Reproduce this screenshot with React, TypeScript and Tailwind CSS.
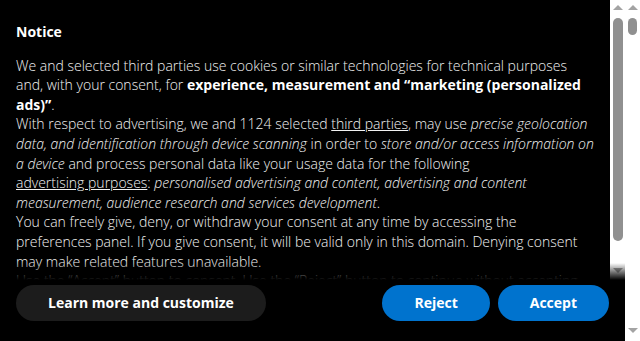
const Arrow = ({ down = false }: { down?: boolean }) => (
  <svg width="10" height="5" viewBox="0 0 10 5" className="fill-[#a3a3a3]">
    {down ? <polygon points="0,0 10,0 5,5" /> : <polygon points="0,5 10,5 5,0" />}
  </svg>
);

export default function App() {
  return (
    <div className="flex h-[341px] bg-white font-['Open_Sans',sans-serif] text-white">
      <div className="flex min-w-0 flex-1 flex-col bg-black">
        <div className="relative flex h-[280px]">
          <div className="min-w-0 flex-1 overflow-hidden px-4 pt-[22px] text-[14px] font-light leading-[19.6px] text-[#f2f2f2]">
            <h2 className="mb-[14px] font-bold text-white">Notice</h2>
            <p>
              We and selected third parties use cookies or similar technologies for technical purposes
              and, with your consent, for{" "}
              <b className="font-bold text-white">
                experience, measurement and “marketing (personalized ads)”
              </b>
              .
            </p>
            <p>
              With respect to advertising, we and 1124 selected <u>third parties</u>, may use{" "}
              <i>precise geolocation data, and identification through device scanning</i> in order to{" "}
              <i>store and/or access information on a device</i> and process personal data like your
              usage data for the following{" "}
              <u className="whitespace-nowrap">advertising purposes</u>:{" "}
              <i>
                personalised advertising and content, advertising and content measurement, audience
                research and services development
              </i>
              .
            </p>
            <p>
              You can freely give, deny, or withdraw your consent at any time by accessing the
              preferences panel. If you give consent, it will be valid only in this domain. Denying
              consent may make related features unavailable.
            </p>
            <p>
              Use the “Accept” button to consent. Use the “Reject” button to continue without
              accepting.
            </p>
          </div>
          <div className="flex w-[15px] flex-col items-center bg-white pt-[5px]">
            <Arrow />
            <div className="mt-[8px] h-[223px] w-[10px] rounded-full bg-[#909090]" />
            <div className="flex-1" />
            <div className="pb-[7px]">
              <Arrow down />
            </div>
          </div>
          <div className="pointer-events-none absolute inset-x-0 bottom-0 h-[17px] bg-linear-to-b from-transparent to-black" />
        </div>
        <div className="flex items-center px-4 pt-[5px]">
          <button className="h-9 rounded-full bg-[#1c1c1c] px-8 pb-px text-[14px] font-bold text-white">
            Learn more and customize
          </button>
          <div className="ml-auto flex gap-2">
            <button className="h-9 rounded-full bg-[#0073ce] px-8 pb-px text-[14px] font-bold text-white">
              Reject
            </button>
            <button className="h-9 rounded-full bg-[#0073ce] px-8 pb-px text-[14px] font-bold text-white">
              Accept
            </button>
          </div>
        </div>
      </div>
      <div className="flex w-[15px] flex-col items-center bg-white pt-[5px] pb-[8px]">
        <Arrow />
        <div className="mt-[8px] h-[17px] w-[9px] rounded-full bg-[#909090]" />
        <div className="flex-1" />
        <Arrow down />
      </div>
    </div>
  );
}
